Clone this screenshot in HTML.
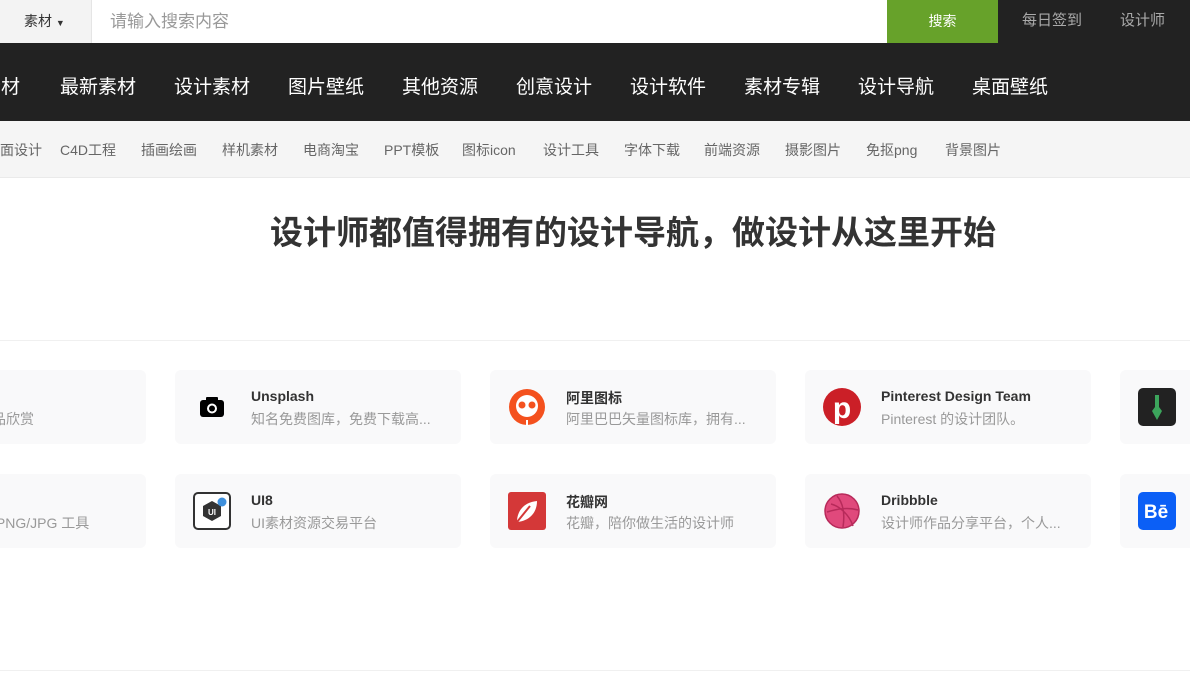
<!DOCTYPE html><html><head><meta charset="utf-8"><style>
*{margin:0;padding:0;box-sizing:border-box}
html,body{width:1190px;height:685px;overflow:hidden}
body{background:#fff;font-family:"Liberation Sans","Noto Sans CJK SC",sans-serif;position:relative}
.a{position:absolute}
.top{left:0;top:0;width:1190px;height:43px;background:#222}
.sel{left:0;top:0;width:92px;height:43px;background:#f3f3f3;font-size:14px;color:#333;line-height:43px;padding-left:24px;border-right:1px solid #e5e5e5}
.inp{left:92px;top:0;width:795px;height:43px;background:#fff;font-size:17px;color:#999;line-height:43px;padding-left:18px}
.btn{left:887px;top:0;width:111px;height:43px;background:#67a22a;color:#fff;font-size:14px;line-height:43px;text-align:center}
.tl{top:0;line-height:42px;font-size:15px;color:#aaa}
.nav{left:0;top:43px;width:1190px;height:78px;background:#222;overflow:hidden}
.nav span{position:absolute;top:0;line-height:90px;color:#fff;font-size:19px}
.sub{left:0;top:121px;width:1190px;height:57px;background:#f5f5f5;border-bottom:1px solid #eaeaea;overflow:hidden}
.sub span{position:absolute;line-height:58px;font-size:14px;color:#666}
h1{position:absolute;left:0;width:1266px;text-align:center;top:206px;font-size:33px;color:#333;font-weight:bold}
.card{position:absolute;width:286px;height:74px;background:#f9f9fa;border-radius:6px;overflow:hidden}
.card .ic{position:absolute;left:18px;top:18px;width:38px;height:38px}
.card b{position:absolute;left:76px;top:18px;font-size:14px;color:#333}
.card i{position:absolute;left:76px;top:39px;font-size:14px;color:#999;font-style:normal;white-space:nowrap}
</style></head><body>
<div class="a top"></div>
<div class="a sel">素材 <span style="font-size:9px">▼</span></div>
<div class="a inp">请输入搜索内容</div>
<div class="a btn">搜索</div>
<div class="a tl" style="left:1022px">每日签到</div>
<div class="a tl" style="left:1120px">设计师</div>
<div class="a nav">
<span style="left:-18px">素材</span><span style="left:60px">最新素材</span><span style="left:174px">设计素材</span><span style="left:288px">图片壁纸</span><span style="left:402px">其他资源</span><span style="left:516px">创意设计</span><span style="left:630px">设计软件</span><span style="left:744px">素材专辑</span><span style="left:858px">设计导航</span><span style="left:972px">桌面壁纸</span>
</div>
<div class="a sub">
<span style="left:-14px">平面设计</span><span style="left:60px">C4D工程</span><span style="left:141px">插画绘画</span><span style="left:222px">样机素材</span><span style="left:303px">电商淘宝</span><span style="left:384px">PPT模板</span><span style="left:462px">图标icon</span><span style="left:543px">设计工具</span><span style="left:624px">字体下载</span><span style="left:704px">前端资源</span><span style="left:785px">摄影图片</span><span style="left:866px">免抠png</span><span style="left:945px">背景图片</span>
</div>
<h1>设计师都值得拥有的设计导航，做设计从这里开始</h1>
<div class="a" style="left:0;top:340px;width:1190px;height:1px;background:#f0f0f0"></div>
<div class="a" style="left:0;top:670px;width:1190px;height:1px;background:#f0f0f0"></div>

<div class="card" style="left:-140px;top:370px"><i>设计师作品欣赏</i></div>
<div class="card" style="left:175px;top:370px"><svg class="ic" viewBox="0 0 38 38"><rect x="7" y="12" width="24" height="17" rx="3" fill="#000"/><rect x="13" y="9" width="12" height="5" rx="1" fill="#000"/><circle cx="19" cy="20.5" r="5" fill="#fff"/><circle cx="19" cy="20.5" r="3" fill="#000"/></svg><b>Unsplash</b><i>知名免费图库，免费下载高...</i></div>
<div class="card" style="left:490px;top:370px"><svg class="ic" viewBox="0 0 38 38"><circle cx="19" cy="19" r="18" fill="#f4511e"/><circle cx="19" cy="18" r="11" fill="#fff"/><circle cx="14" cy="17" r="3.5" fill="#f4511e"/><circle cx="24" cy="17" r="3.5" fill="#f4511e"/><rect x="18" y="32" width="2" height="6" fill="#fff"/></svg><b>阿里图标</b><i>阿里巴巴矢量图标库，拥有...</i></div>
<div class="card" style="left:805px;top:370px"><svg class="ic" viewBox="0 0 38 38"><circle cx="19" cy="19" r="19" fill="#cb1f27"/><text x="19" y="30" text-anchor="middle" font-size="30" font-weight="bold" fill="#fff" font-family="Liberation Sans">p</text></svg><b>Pinterest Design Team</b><i>Pinterest 的设计团队。</i></div>
<div class="card" style="left:1120px;top:370px"><svg class="ic" viewBox="0 0 38 38"><rect width="38" height="38" rx="5" fill="#222"/><path d="M17 7h4v12l3 4-5 9-5-9 3-4z" fill="#3ca55c"/></svg></div>

<div class="card" style="left:-140px;top:474px"><i>在线压缩 PNG/JPG 工具</i></div>
<div class="card" style="left:175px;top:474px"><svg class="ic" viewBox="0 0 38 38"><rect x="1" y="1" width="36" height="36" rx="4" fill="#fff" stroke="#333" stroke-width="2"/><path d="M19 9l9 5v10l-9 5-9-5V14z" fill="#333"/><text x="19" y="23" text-anchor="middle" font-size="8" fill="#fff" font-weight="bold" font-family="Liberation Sans">UI</text><circle cx="29" cy="10" r="4.5" fill="#3d8fdc"/></svg><b>UI8</b><i>UI素材资源交易平台</i></div>
<div class="card" style="left:490px;top:474px"><svg class="ic" viewBox="0 0 38 38"><rect width="38" height="38" rx="3" fill="#d43838"/><path d="M9 30C9 18 17 10 29 9C29 21 21 29 9 30Z" fill="#fff"/><path d="M9 30L22 14" stroke="#d43838" stroke-width="2"/></svg><b>花瓣网</b><i>花瓣，陪你做生活的设计师</i></div>
<div class="card" style="left:805px;top:474px"><svg class="ic" viewBox="0 0 38 38"><circle cx="19" cy="19" r="17" fill="#e0497c" stroke="#b72a5a" stroke-width="1.5"/><path d="M8 12c8 2 18 10 22 22M4 20c10-3 20-5 31-2M14 4c6 7 8 18 6 31" fill="none" stroke="#b72a5a" stroke-width="1.5"/></svg><b>Dribbble</b><i>设计师作品分享平台，个人...</i></div>
<div class="card" style="left:1120px;top:474px"><svg class="ic" viewBox="0 0 38 38"><rect width="38" height="38" rx="5" fill="#0b5ff6"/><text x="18" y="26" text-anchor="middle" font-size="19" font-weight="bold" fill="#fff" font-family="Liberation Sans">Bē</text></svg></div>
</body></html>
